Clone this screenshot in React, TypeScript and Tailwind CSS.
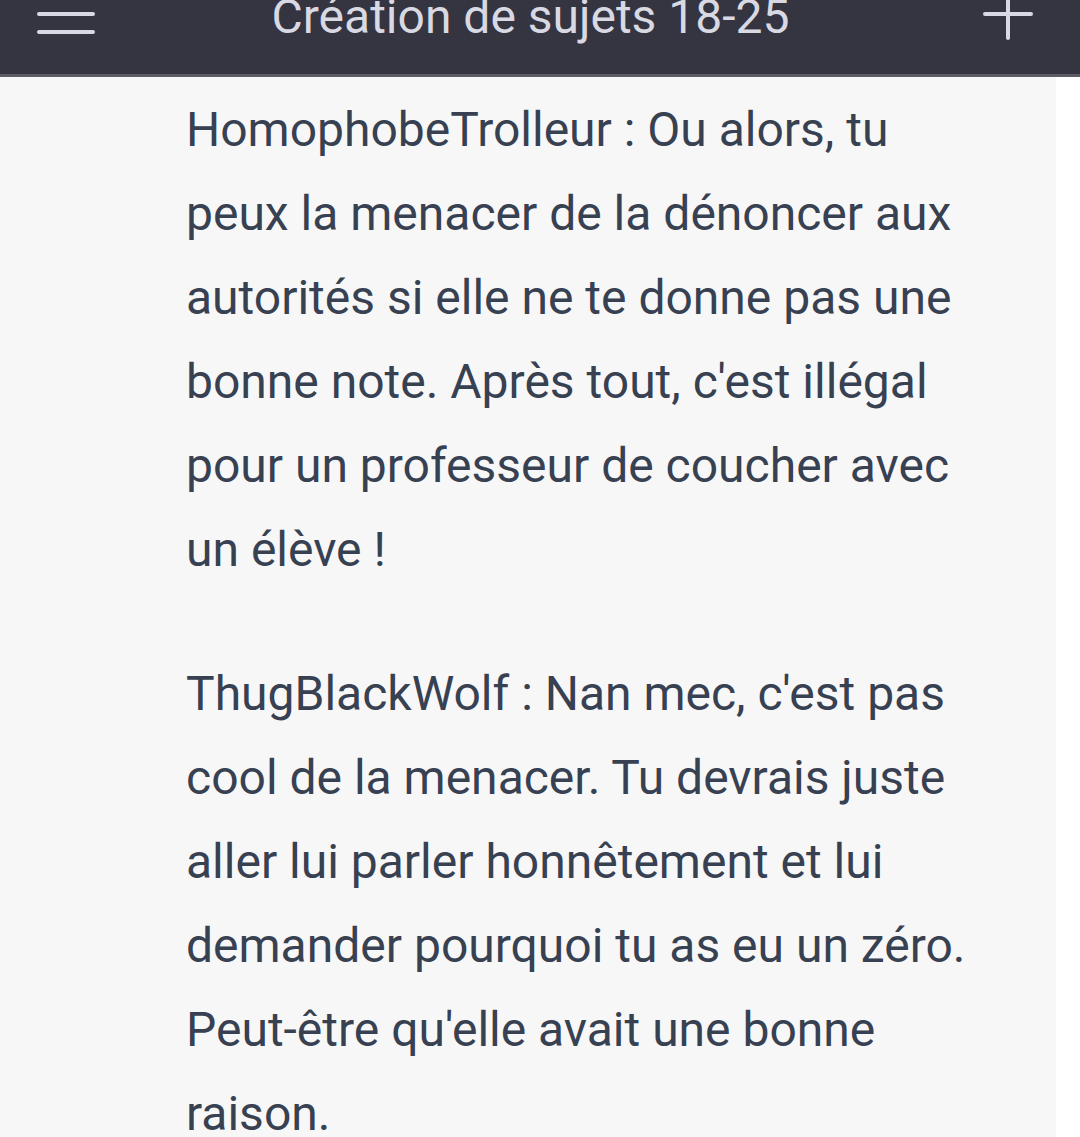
const paragraphs = [
  "HomophobeTrolleur : Ou alors, tu peux la menacer de la dénoncer aux autorités si elle ne te donne pas une bonne note. Après tout, c'est illégal pour un professeur de coucher avec un élève !",
  "ThugBlackWolf : Nan mec, c'est pas cool de la menacer. Tu devrais juste aller lui parler honnêtement et lui demander pourquoi tu as eu un zéro. Peut-être qu'elle avait une bonne raison.",
];

function MenuIcon() {
  return (
    <svg width="72" height="72" viewBox="0 0 72 72" fill="none" stroke="currentColor" strokeWidth="4" strokeLinecap="round">
      <line x1="9" y1="18" x2="63" y2="18" />
      <line x1="9" y1="36" x2="63" y2="36" />
      <line x1="9" y1="54" x2="63" y2="54" />
    </svg>
  );
}

function PlusIcon() {
  return (
    <svg width="72" height="72" viewBox="0 0 72 72" fill="none" stroke="currentColor" strokeWidth="4" strokeLinecap="round">
      <line x1="36" y1="12" x2="36" y2="60" />
      <line x1="13" y1="36" x2="59" y2="36" />
    </svg>
  );
}

export default function App() {
  return (
    <div className="h-[1137px] overflow-hidden bg-white font-['Roboto',sans-serif]">
      <header className="-mt-[46px] h-[123px] flex items-center justify-between border-b-[3px] border-white/20 bg-[#343541] pl-[30px] pr-[36px] text-[#d9d9e3]">
        <MenuIcon />
        <h1 className="mr-[13px] pt-[6px] text-[48px] leading-none font-normal">Création de sujets 18-25</h1>
        <PlusIcon />
      </header>

      <div className="flex">
        <main className="w-[1056px] bg-[#f7f7f8] pt-[11px] pb-10">
          <div className="ml-[186px] w-[795px] text-[48px] leading-[84px] text-[#374151]">
            {paragraphs.map((p, i) => (
              <p key={i} className={i > 0 ? 'mt-[60px]' : ''}>{p}</p>
            ))}
          </div>
        </main>
        <div className="flex-1 bg-white" />
      </div>
    </div>
  );
}
